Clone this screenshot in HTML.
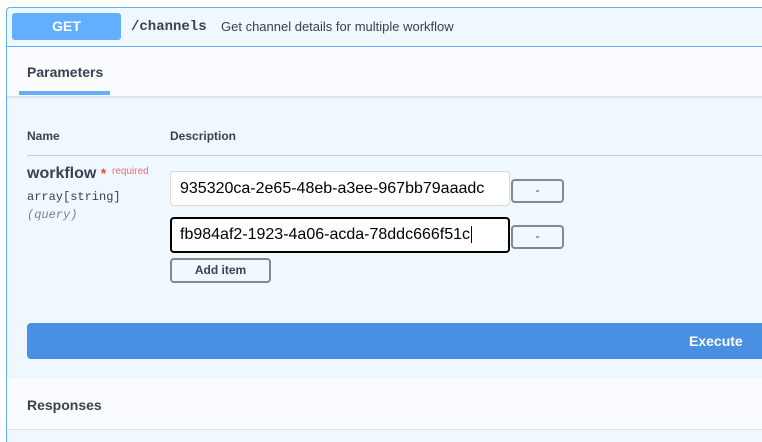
<!DOCTYPE html>
<html style="width:762px;height:442px;overflow:hidden"><head><style>
*{margin:0;padding:0;box-sizing:border-box}
body{width:762px;height:442px;overflow:hidden;background:#fff;font-family:"Liberation Sans",Arial,sans-serif;color:#3b4151;position:relative}
.a{position:absolute}
.outer{left:6px;top:7px;width:800px;height:435px;border:1px solid #61affe;border-right:none;border-bottom:none;background:#eff7ff;border-radius:4px 0 0 0}
.get{left:12px;top:13px;width:109px;height:27px;background:#61affe;border-radius:3px;color:#fff;font-weight:bold;font-size:14px;text-align:center;line-height:27px}
.mono{font-family:"Liberation Mono",monospace}
.btn{background:#eff7ff;border:2px solid #888;border-radius:4px;font-size:12px;text-align:center;color:#3b4151}
.inp{background:#fff;border-radius:4px;font-size:16px;color:#000;padding-left:9px;line-height:33px}
</style></head><body>
<div class="a outer"></div>
<div class="a get">GET</div>
<div class="a mono" style="left:131px;top:19px;font-size:14px;font-weight:bold;color:#3b4151">/channels</div>
<div class="a" style="left:221px;top:19px;font-size:13px;color:#3b4151">Get channel details for multiple workflow</div>
<div class="a" style="left:7px;top:46px;width:800px;height:1px;background:#61affe"></div>
<div class="a" style="left:7px;top:47px;width:800px;height:51px;background:#fafcff;border-bottom:2px solid #dde3ea"></div>
<div class="a" style="left:27px;top:64px;font-size:14px;font-weight:bold">Parameters</div>
<div class="a" style="left:19px;top:91px;width:91px;height:4px;background:#61affe"></div>
<div class="a" style="left:27px;top:129px;font-size:12px;font-weight:bold">Name</div>
<div class="a" style="left:170px;top:129px;font-size:12px;font-weight:bold">Description</div>
<div class="a" style="left:27px;top:155px;width:740px;height:1px;background:#c8ccd2"></div>
<div class="a" style="left:27px;top:165px;font-size:16px;font-weight:bold">workflow <span style="color:#f93e3e;font-size:14px">*</span></div>
<div class="a" style="left:112px;top:166px;font-size:10px;color:#f93e3e;opacity:.75">required</div>
<div class="a mono" style="left:27px;top:190px;font-size:12px">array[string]</div>
<div class="a mono" style="left:27px;top:208px;font-size:12px;font-style:italic;color:#808080">(query)</div>
<div class="a inp" style="left:170px;top:171px;width:340px;height:35px;border:1px solid #d9d9d9">935320ca-2e65-48eb-a3ee-967bb79aaadc</div>
<div class="a btn" style="left:511px;top:179px;width:53px;height:24px;line-height:18px">-</div>
<div class="a inp" style="left:170px;top:217px;width:340px;height:36px;border:2px solid #000;line-height:31px;padding-left:8px">fb984af2-1923-4a06-acda-78ddc666f51c<span style="border-left:1px solid #000;margin-left:1px"></span></div>
<div class="a btn" style="left:511px;top:225px;width:53px;height:24px;line-height:18px">-</div>
<div class="a btn" style="left:170px;top:258px;width:101px;height:25px;line-height:20px;font-weight:bold">Add item</div>
<div class="a" style="left:27px;top:323px;width:800px;height:36px;background:#4990e2;border-radius:4px"></div>
<div class="a" style="left:689px;top:333px;font-size:14px;font-weight:bold;color:#fff">Execute</div>
<div class="a" style="left:7px;top:379px;width:800px;height:51px;background:#fafcff;border-bottom:1px solid #dde3ea"></div>
<div class="a" style="left:27px;top:397px;font-size:14px;font-weight:bold">Responses</div>
</body></html>
